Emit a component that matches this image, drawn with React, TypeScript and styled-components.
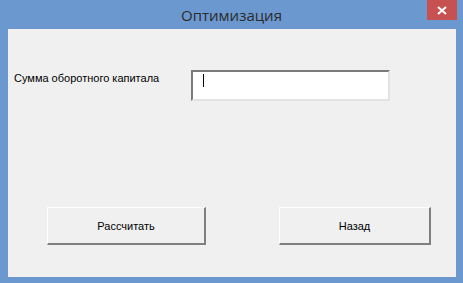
import React from "react";
import styled, { createGlobalStyle } from "styled-components";

const Global = createGlobalStyle`
  html, body { margin: 0; padding: 0; }
  body { background: #6b98cf; overflow: hidden; }
`;

const Window = styled.div`
  width: 463px;
  height: 283px;
  background: #6b98cf;
  display: flex;
  flex-direction: column;
  box-sizing: border-box;
`;

const TitleBar = styled.div`
  height: 29px;
  display: flex;
  align-items: flex-start;
  position: relative;
`;

const Title = styled.div`
  flex: 1;
  text-align: center;
  font-family: "Open Sans", "Noto Sans", sans-serif;
  font-size: 15px;
  line-height: 20px;
  padding-top: 5px;
  color: #2b2b2b;
`;

const CloseButton = styled.div`
  position: absolute;
  top: 0;
  left: 427px;
  width: 30px;
  height: 20px;
  background: #c75050;
  display: flex;
  align-items: center;
  justify-content: center;
`;

const Client = styled.div`
  margin: 0 7px 6px 8px;
  height: 248px;
  background: #f0f0f0;
  box-sizing: border-box;
  display: flex;
  flex-direction: column;
  font-family: "Liberation Sans", Arial, sans-serif;
  font-size: 11px;
  color: #000;
`;

const FieldRow = styled.div`
  display: flex;
  padding-top: 41px;
  padding-left: 6px;
`;

const Label = styled.div`
  width: 177px;
  padding-top: 2px;
  line-height: 13px;
`;

const TextBox = styled.div`
  width: 199px;
  height: 31px;
  box-sizing: border-box;
  background: #fff;
  border-top: 2px solid #7a7a7a;
  border-left: 2px solid #7a7a7a;
  border-right: 2px solid #e3e3e3;
  border-bottom: 2px solid #e3e3e3;
  display: flex;
  padding: 2px 0 0 10px;
`;

const Caret = styled.div`
  width: 1px;
  height: 13px;
  background: #000;
`;

const ButtonRow = styled.div`
  display: flex;
  margin-top: 106px;
  padding-left: 39px;
  gap: 73px;
`;

const Button = styled.div<{ $w: number }>`
  width: ${(p) => p.$w}px;
  height: 38px;
  box-sizing: border-box;
  background: #f0f0f0;
  border-top: 1px solid #ffffff;
  border-left: 1px solid #ffffff;
  border-right: 2px solid #808080;
  border-bottom: 2px solid #808080;
  display: flex;
  align-items: center;
  justify-content: center;
  padding-top: 1px;
`;

export default function App() {
  return (
    <>
      <Global />
      <Window>
        <TitleBar>
          <Title>Оптимизация</Title>
          <CloseButton>
            <svg width="10" height="9" viewBox="0 0 10 9">
              <path d="M1 1 L9 8 M9 1 L1 8" stroke="#fff" strokeWidth="2" />
            </svg>
          </CloseButton>
        </TitleBar>
        <Client>
          <FieldRow>
            <Label>Сумма оборотного капитала</Label>
            <TextBox>
              <Caret />
            </TextBox>
          </FieldRow>
          <ButtonRow>
            <Button $w={159}>Рассчитать</Button>
            <Button $w={152}>Назад</Button>
          </ButtonRow>
        </Client>
      </Window>
    </>
  );
}
